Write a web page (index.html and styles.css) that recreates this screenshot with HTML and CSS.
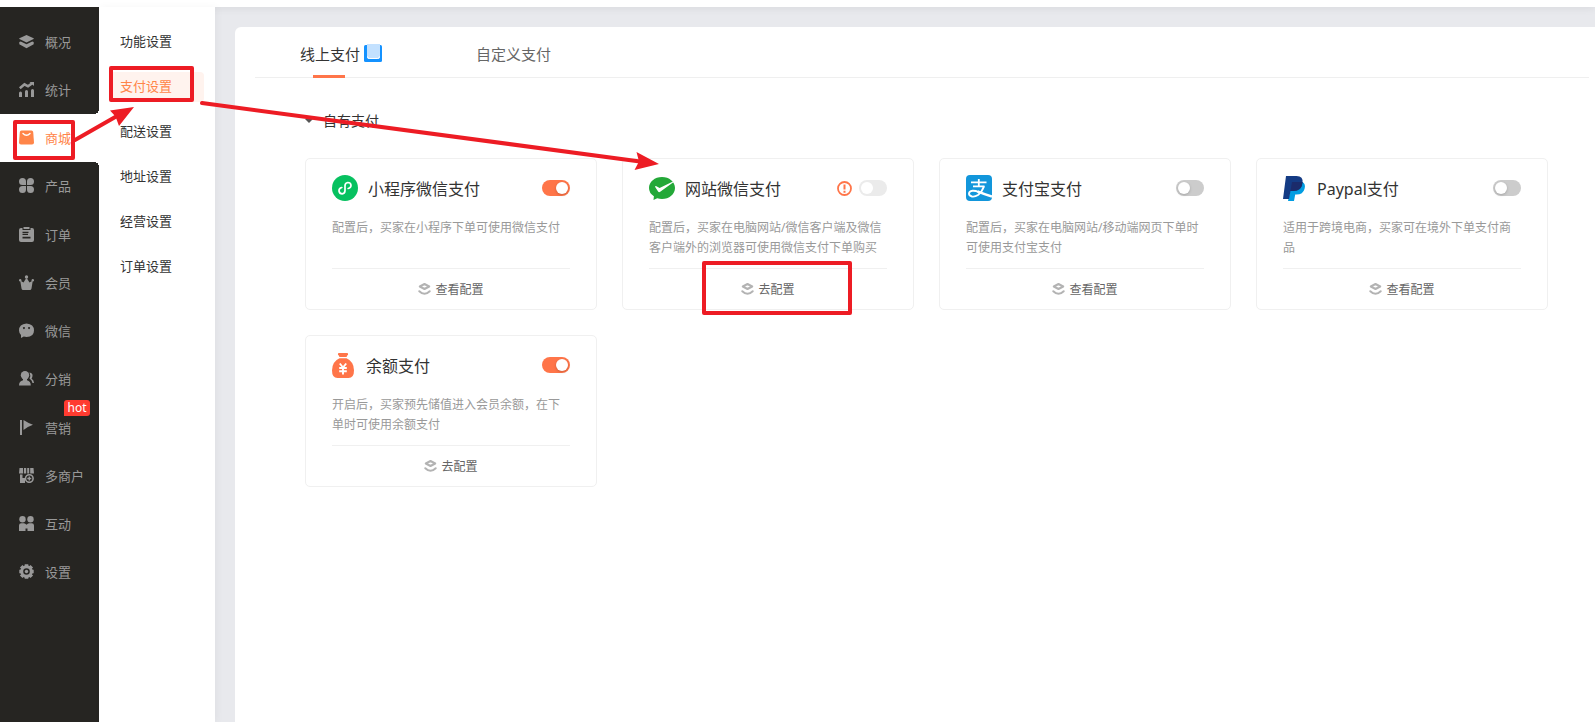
FILE: index.html
```html
<!DOCTYPE html>
<html lang="zh-CN">
<head>
<meta charset="utf-8">
<title>支付设置</title>
<link rel="stylesheet" href="styles.css">
</head>
<body>
<svg class="defs" aria-hidden="true">
  <symbol id="layers" viewBox="0 0 13 12">
    <path d="M6.500 1 11.200 3.500 6.500 6 1.800 3.500z" fill="none" stroke="#b3b3b3" stroke-width="2" stroke-linejoin="round"/>
    <path d="M1.300 8.200Q6.500 13.200 11.700 8.200" fill="none" stroke="#b3b3b3" stroke-width="2" stroke-linecap="round" stroke-linejoin="round"/>
  </symbol>
</svg>
<div class="topbar"></div>
<div class="layout">
  <nav class="sidebar" aria-label="主菜单">
    <ul class="menu">
      <li class="menu-item"><a href="#"><svg class="menu-icon" viewBox="0 0 15 15"><path d="M7.500 1 14.600 4.200Q15 4.600 14.600 5L7.500 8.600.4 5Q0 4.600.4 4.200z"/><path d="M.3 8 1.800 7.600 7.500 10.300 13.200 7.600 14.700 8V10.200L7.500 14.200.3 10.200z"/></svg>概况</a></li>
      <li class="menu-item"><a href="#"><svg class="menu-icon" viewBox="0 0 15 15"><path d="M0 11q0-1.500 1.500-1.500T3 11v4H0zM6 9.500Q6 8 7.500 8T9 9.500V15H6zM12 8.500Q12 7 13.500 7T15 8.500V15h-3z"/><path d="M.8 6.300 5.500 2.300 9 4.300 13.200 1.200" fill="none" stroke="currentColor" stroke-width="2.600"/><path d="M10.500 0H15v4z"/></svg>统计</a></li>
      <li class="menu-item active"><a href="#"><svg class="menu-icon" viewBox="0 0 15 15"><path d="M2.500.5h10Q14 .5 14.200 2L15 12.500Q15 14.500 13 14.500H2Q0 14.500 0 12.500L.8 2Q1 .5 2.500.5z"/><path d="M4 3.500Q7.500 7 11 3.500" fill="none" stroke="#fff" stroke-width="1.400" stroke-linecap="round"/></svg>商城</a></li>
      <li class="menu-item"><a href="#"><svg class="menu-icon" viewBox="0 0 15 15"><path d="M3.500 0Q7 0 7 3.500V7H3.500Q0 7 0 3.500T3.500 0zM11.500 0Q15 0 15 3.500T11.500 7H8V3.500Q8 0 11.500 0zM3.500 8H7v3.500Q7 15 3.500 15T0 11.500 3.500 8zM8 8h3.500Q15 8 15 11.500T11.500 15 8 11.500z"/></svg>产品</a></li>
      <li class="menu-item"><a href="#"><svg class="menu-icon" viewBox="0 0 15 15"><path fill-rule="evenodd" d="M2 1h1.500v2h8V1H13q2 0 2 2v10q0 2-2 2H2q-2 0-2-2V3q0-2 2-2zM3.500 6h6V4.800h-6zM3.500 8h5.500V6.800H3.500zM3.500 11.500h8V9.800h-8z"/><path d="M4.500 0h6v2h-6z"/></svg>订单</a></li>
      <li class="menu-item"><a href="#"><svg class="menu-icon" viewBox="0 0 15 15"><path d="M1.200 5.500 4.500 7.500 7 3.500h1l2.500 4 3.300-2-1.300 8q-.3 1.500-1.700 1.500H4.200q-1.400 0-1.700-1.500z"/><circle cx="7.500" cy="2" r="1.700"/><circle cx="1.200" cy="5.200" r="1.200"/><circle cx="13.800" cy="5.200" r="1.200"/></svg>会员</a></li>
      <li class="menu-item"><a href="#"><svg class="menu-icon" viewBox="0 0 15 15"><path fill-rule="evenodd" d="M7.500.5Q15 1 15 7.500T7.500 14L4.800 13.500 2 15V12Q0 10 0 7.500 0 1 7.500.5zM4.900 4a1 1 0 1 0 .1 0zM10 4a1 1 0 1 0 .1 0z"/></svg>微信</a></li>
      <li class="menu-item"><a href="#"><svg class="menu-icon" viewBox="0 0 15 15"><circle cx="6" cy="4.200" r="4.200"/><path d="M4 7h4v2.200q3.800 1 3.800 5.300H0Q0 10.200 4 9.200z"/><path d="M10.500 1.500Q14 2 13.500 5q-.2 1.500-1 2.500 2.500 1.500 2.500 4.500h-1.500q-.5-3-3-4.500 1.500-3 0-6z"/></svg>分销</a></li>
      <li class="menu-item"><a href="#"><svg class="menu-icon" viewBox="0 0 15 15"><path d="M1 0h2v15H1zM4.500 0Q9 3 14 4.800 9 6.500 4.500 10z"/></svg>营销</a><span class="hot">hot</span></li>
      <li class="menu-item"><a href="#"><svg class="menu-icon" viewBox="0 0 15 15"><path d="M.5 0H4v5.500H0zM5 0h2.200v5.500H4.800zM8.200 0h2v5.500h-2zM11.200 0h3.300l.5 5.500h-3.800zM1 6.500h2.500V10H6v5H1z"/><circle cx="10.300" cy="10.500" r="3.800" fill="none" stroke="currentColor" stroke-width="1.600"/><path d="M9.600 8.500h1.400v4H9.600zM8.300 9.800h4v1.400h-4z"/></svg>多商户</a></li>
      <li class="menu-item"><a href="#"><svg class="menu-icon" viewBox="0 0 15 15"><circle cx="3.500" cy="3.300" r="3.200"/><circle cx="11.500" cy="3.300" r="3.200"/><path d="M0 15V9.500Q0 7.200 2.200 7.200H5q1.200 0 2.500 1.500Q8.800 7.200 10 7.200h2.800Q15 7.200 15 9.500V15H8.500v-2.500h-2V15z"/></svg>互动</a></li>
      <li class="menu-item"><a href="#"><svg class="menu-icon" viewBox="0 0 15 15"><circle cx="7.500" cy="7.500" r="4.800" fill="none" stroke="currentColor" stroke-width="3"/><g stroke="currentColor" stroke-width="3.600"><path d="M2.200 2.200 4 4M11 11l1.800 1.800M2.200 12.800 4 11M11 4l1.800-1.800M7.500 .3V2M7.500 13v1.700M.3 7.500H2M13 7.500h1.700"/></g><circle cx="7.500" cy="7.500" r="1.700"/></svg>设置</a></li>
    </ul>
  </nav>

  <nav class="submenu" aria-label="商城设置">
    <a class="sub-link" href="#">功能设置</a>
    <a class="sub-link current" href="#">支付设置</a>
    <a class="sub-link" href="#">配送设置</a>
    <a class="sub-link" href="#">地址设置</a>
    <a class="sub-link" href="#">经营设置</a>
    <a class="sub-link" href="#">订单设置</a>
  </nav>

  <main class="panel">
    <div class="tabs">
      <button class="tab selected" type="button">线上支付<svg class="guide" viewBox="0 0 18 18" aria-hidden="true"><rect y="1" width="18" height="17" rx="1.500" fill="#1492ff"/><path d="M3 0h13v13q0 2-2 2H5q-2 0-2-2z" fill="#c3e1ff"/><path d="M3.500 12.500q0 2 2 2h8q2 0 2-2" fill="none" stroke="#fff"/></svg></button>
      <button class="tab" type="button">自定义支付</button>
    </div>

    <section class="group">
      <h2 class="group-title"><span class="caret"></span>自有支付</h2>
      <div class="cards">
        <article class="card">
          <header class="card-head">
            <svg class="logo" viewBox="0 0 26 26" aria-hidden="true"><circle cx="13" cy="13" r="13" fill="#07c160"/><path d="M9.800 12.500Q6.800 13.200 7 16q.5 2.800 3.200 2.800 2.800-.3 2.800-3.300V10.800q0-3 2.800-3.300Q19 7.500 19 10.500q-.2 2.600-2.800 3" fill="none" stroke="#fff" stroke-width="1.700" stroke-linecap="round"/></svg>
            <h3 class="card-title">小程序微信支付</h3>
            <input class="switch" type="checkbox" aria-label="小程序微信支付" checked>
          </header>
          <p class="desc">配置后，买家在小程序下单可使用微信支付</p>
          <a class="config" href="#"><svg class="layers"><use href="#layers"/></svg>查看配置</a>
        </article>
        <article class="card">
          <header class="card-head">
            <svg class="logo" viewBox="0 0 26 26" aria-hidden="true"><path d="M13 2c7.200 0 13 4.900 13 11s-5.800 11-13 11q-2.500 0-4.800-.8L4.500 25l.4-3.700Q0 18.200 0 13C0 6.900 5.800 2 13 2z" fill="#23a838"/><path d="M6 11.800q.3-1 1.400-.6l3.200 1.800L25 6l-.3 1L11.200 16.800q-1.300.8-2.100-.3z" fill="#fff"/></svg>
            <h3 class="card-title">网站微信支付</h3>
            <svg class="warn" viewBox="0 0 15 15" role="img" aria-label="未配置"><circle cx="7.500" cy="7.500" r="6.500" fill="none" stroke="#ff7549" stroke-width="1.800"/><path d="M7.500 3.500v5M7.500 9.800v1.900" stroke="#ff7549" stroke-width="2"/></svg>
            <input class="switch" type="checkbox" aria-label="网站微信支付" disabled>
          </header>
          <p class="desc">配置后，买家在电脑网站/微信客户端及微信客户端外的浏览器可使用微信支付下单购买</p>
          <a class="config" href="#"><svg class="layers"><use href="#layers"/></svg>去配置</a>
        </article>
        <article class="card">
          <header class="card-head">
            <svg class="logo" viewBox="0 0 26 26" aria-hidden="true"><rect width="26" height="26" rx="4" fill="#1296db"/><g fill="none" stroke="#fff"><path d="M5 7.300h15.500M12.800 4v7M7 11.300h11.500" stroke-width="1.800"/><path d="M18 11.300Q16 17 12 20q-3 2-6 1.500-3-.7-3-3 .2-2.300 3.500-2.700 3-.2 6 1.200" stroke-width="1.900"/><path d="M11.500 16.400Q18 19.200 26 21.500" stroke-width="2.600"/></g></svg>
            <h3 class="card-title">支付宝支付</h3>
            <input class="switch" type="checkbox" aria-label="支付宝支付">
          </header>
          <p class="desc">配置后，买家在电脑网站/移动端网页下单时可使用支付宝支付</p>
          <a class="config" href="#"><svg class="layers"><use href="#layers"/></svg>查看配置</a>
        </article>
        <article class="card">
          <header class="card-head">
            <svg class="logo narrow" viewBox="0 0 24 26" aria-hidden="true"><path d="M9 7h10.500Q23 9 21.500 14q-1.500 5.500-8 5.500H12.200L11 26H5z" fill="#019de2"/><path d="M3 1h10.500q7 0 6 7-1.500 8-9.500 8H7.500L6 24H0z" fill="#143b84"/><path d="M9 7h10.500q0 9-9.500 9H7.500z" fill="#1b2b6b"/></svg>
            <h3 class="card-title">Paypal支付</h3>
            <input class="switch" type="checkbox" aria-label="Paypal支付">
          </header>
          <p class="desc">适用于跨境电商，买家可在境外下单支付商品</p>
          <a class="config" href="#"><svg class="layers"><use href="#layers"/></svg>查看配置</a>
        </article>
        <article class="card">
          <header class="card-head">
            <svg class="logo narrow" viewBox="0 0 24 26" aria-hidden="true"><path d="M6 2.200Q5.700 1 7 1h8q1.300 0 1 1.200L14.500 5h-7z" fill="#ff7549"/><path d="M7.500 6.200h7Q22 9.500 22 18.500q0 7.500-5.500 7.500h-11Q0 26 0 18.500 0 9.500 7.500 6.200z" fill="#ff7549"/><path d="M7.800 11.500 11 15.500 14.200 11.500M11 15.500V22.500M7.200 16h7.600M7.200 19.200h7.600" fill="none" stroke="#fff" stroke-width="1.900"/></svg>
            <h3 class="card-title">余额支付</h3>
            <input class="switch" type="checkbox" aria-label="余额支付" checked>
          </header>
          <p class="desc">开启后，买家预先储值进入会员余额，在下单时可使用余额支付</p>
          <a class="config" href="#"><svg class="layers"><use href="#layers"/></svg>去配置</a>
        </article>
      </div>
    </section>
  </main>
</div>

<svg class="annotations" width="860" height="320" aria-hidden="true">
  <g fill="none" stroke="#ed1c24" stroke-width="4" stroke-linejoin="round">
    <rect x="15" y="122" width="58" height="36"/>
    <rect x="111" y="68" width="81" height="32"/>
    <rect x="704" y="263" width="146" height="50"/>
    <path d="M75 140 117 116M202 103 640 161.500" stroke-linecap="round"/>
  </g>
  <path d="M134 107 110 110.500 115.500 116.500 119 126zM659 164 636.500 152 639 161.500 634.500 170z" fill="#ed1c24"/>
</svg>
</body>
</html>
```

FILE: styles.css
```css
* {
  box-sizing: border-box;
}

body {
  margin: 0;
  min-height: 100vh;
  display: flex;
  flex-direction: column;
  position: relative;
  background: #e8e9ed;
  color: #333;
  font-family: "Noto Sans", "Noto Sans CJK SC", sans-serif;
  font-size: 13px;
}

a {
  color: inherit;
  text-decoration: none;
}

h2,
h3,
p,
ul {
  margin: 0;
  padding: 0;
  font-weight: 400;
}

.defs {
  position: absolute;
  width: 0;
  height: 0;
}

.topbar {
  height: 7px;
  background: #fff;
  box-shadow: 0 1px 8px rgba(0, 0, 0, 0.08);
}

.layout {
  flex: 1;
  display: flex;
}

.sidebar {
  width: 99px;
  flex: none;
  padding-top: 10px;
  background: #262522;
  color: #999;
}

.menu {
  list-style: none;
  display: flex;
  flex-direction: column;
  height: 579px;
}

.menu-item {
  position: relative;
  flex: 1;
  display: flex;
}

.menu-item a {
  flex: 1;
  display: flex;
  align-items: center;
  gap: 11px;
  padding-left: 19px;
}

.menu-icon {
  width: 15px;
  height: 15px;
  fill: currentColor;
}

.menu-item.active {
  background: #fff;
  color: #ff8549;
}

.menu-item.active::before,
.menu-item.active::after {
  content: "";
  position: absolute;
  right: 0;
  width: 5px;
  height: 5px;
}

.menu-item.active::before {
  bottom: 100%;
  background: radial-gradient(circle at 0 0, #262522 5px, #fff 5px);
}

.menu-item.active::after {
  top: 100%;
  background: radial-gradient(circle at 0 100%, #262522 5px, #fff 5px);
}

.hot {
  position: absolute;
  top: -3px;
  right: 9px;
  width: 26px;
  border-radius: 3px 3px 3px 0;
  background: #ff3b30;
  color: #fff;
  font-size: 12px;
  line-height: 16px;
  text-align: center;
}

.submenu {
  width: 116px;
  flex: none;
  display: flex;
  flex-direction: column;
  gap: 15px;
  padding: 20px 11px;
  background: #fff;
  box-shadow: 2px 0 8px rgba(0, 0, 0, 0.04);
}

.sub-link {
  padding: 0 0 2px 10px;
  border-radius: 4px;
  line-height: 28px;
}

.sub-link.current {
  background: #fff3ee;
  color: #ff8549;
}

.panel {
  flex: 1;
  margin: 20px 0 0 20px;
  border-radius: 6px 0 0 0;
  background: #fff;
}

.tabs {
  display: flex;
  gap: 94px;
  margin: 0 6px 0 20px;
  padding-left: 45px;
  border-bottom: 1px solid #efefef;
}

.tab {
  position: relative;
  display: flex;
  align-items: center;
  gap: 4px;
  height: 50px;
  padding: 2px 0 0;
  border: 0;
  background: none;
  color: #666;
  font: inherit;
  font-size: 15px;
}

.tab.selected {
  color: #333;
}

.tab.selected::after {
  content: "";
  position: absolute;
  left: 13px;
  bottom: -1px;
  width: 32px;
  height: 3px;
  background: #ff7549;
}

.guide {
  width: 18px;
  height: 18px;
}

.group {
  padding: 33px 47px 40px 70px;
}

.group-title {
  display: flex;
  align-items: center;
  gap: 10px;
  font-size: 14px;
  line-height: 20px;
}

.caret {
  border: 4px solid transparent;
  border-top-color: #555;
  border-bottom-width: 0;
}

.cards {
  display: grid;
  grid-template-columns: repeat(4, 1fr);
  gap: 25px;
  margin-top: 27px;
}

.card {
  padding: 16px 26px 0;
  border: 1px solid #f0f0f0;
  border-radius: 5px;
}

.card-head {
  display: flex;
  align-items: center;
  height: 26px;
}

.logo {
  width: 26px;
  height: 26px;
  margin-right: 10px;
}

.logo.narrow {
  width: 24px;
}

.card-title {
  flex: 1;
  padding-top: 2px;
  font-size: 16px;
  line-height: 24px;
}

.warn {
  width: 15px;
  height: 15px;
  margin-right: 7px;
}

.switch {
  appearance: none;
  display: flex;
  align-items: center;
  width: 28px;
  height: 16px;
  margin: 0;
  padding: 0 2px;
  border-radius: 8px;
  background: #ccc;
}

.switch::before {
  content: "";
  width: 12px;
  height: 12px;
  border-radius: 50%;
  background: #fff;
  box-shadow: 0 1px 3px rgba(0, 0, 0, 0.2);
}

.switch:checked {
  justify-content: flex-end;
  background: #ff7549;
}

.switch:disabled {
  background: #ebebeb;
}

.switch:disabled::before {
  box-shadow: none;
}

.desc {
  min-height: 40px;
  margin: 17px 0 10px;
  color: #999;
  font-size: 12px;
  line-height: 20px;
}

.config {
  display: flex;
  align-items: center;
  justify-content: center;
  gap: 4px;
  height: 41px;
  border-top: 1px solid #f0f0f0;
  color: #666;
  font-size: 12px;
}

.layers {
  width: 13px;
  height: 12px;
}

.annotations {
  position: absolute;
  top: 0;
  left: 0;
  pointer-events: none;
}
```
